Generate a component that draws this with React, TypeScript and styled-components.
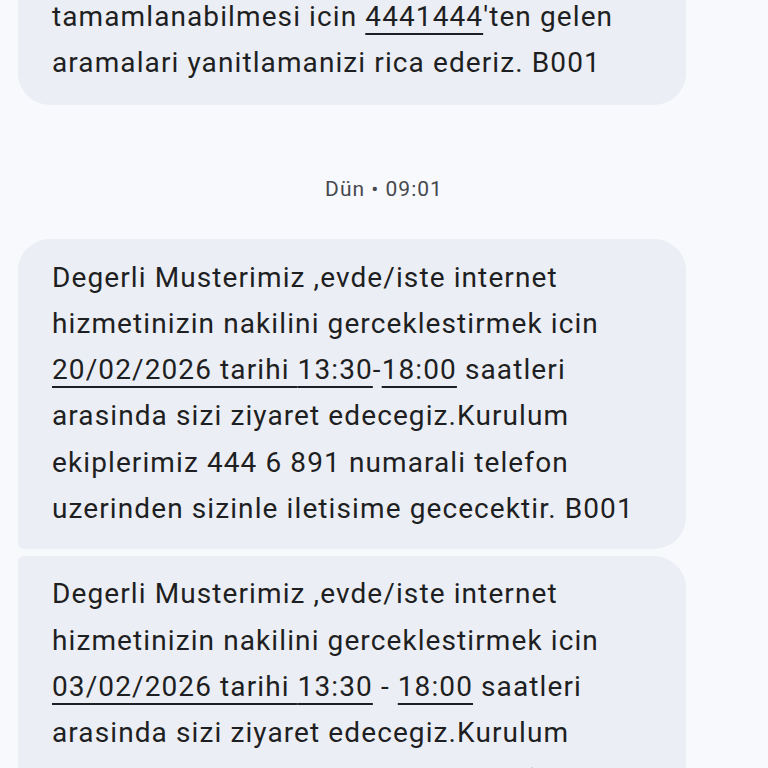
import styled, { createGlobalStyle } from 'styled-components';

const GlobalStyle = createGlobalStyle`
	html, body {
		margin: 0;
		padding: 0;
		background: #f8f9fd;
		overflow: hidden;
	}
	body {
		font-family: Roboto, "Noto Sans", "Liberation Sans", sans-serif;
		-webkit-font-smoothing: antialiased;
	}
`;

const Thread = styled.div`
	width: 768px;
	height: 768px;
	display: flex;
	flex-direction: column;
`;

const Bubble = styled.div<{ $cut?: boolean; $joinTop?: boolean; $joinBottom?: boolean }>`
	margin: 0 82px 0 18px;
	background: #eceef5;
	color: #1e1f22;
	font-size: 28px;
	letter-spacing: 1.1px;
	line-height: 46.3px;
	padding: ${(p) => (p.$cut ? '0 30px 18px 34px' : p.$joinTop ? '15px 30px 17px 34px' : '16px 30px 17px 34px')};
	margin-top: ${(p) => (p.$cut ? '-6px' : '0')};
	border-top-left-radius: ${(p) => (p.$cut ? '0' : p.$joinTop ? '6px' : '32px')};
	border-top-right-radius: ${(p) => (p.$cut ? '0' : '32px')};
	border-bottom-right-radius: 32px;
	border-bottom-left-radius: ${(p) => (p.$joinBottom ? '6px' : '32px')};
	& + & {
		margin-top: 7px;
	}
`;

const Line = styled.div`
	white-space: nowrap;
`;

const Link = styled.span`
	text-decoration: underline;
	text-decoration-thickness: 2px;
	text-underline-offset: 7px;
	text-decoration-skip-ink: none;
`;

const Stamp = styled.div`
	align-self: center;
	margin: 64px 0 30px 0;
	font-size: 21px;
	letter-spacing: 1px;
	line-height: 40px;
	color: #46484e;
`;

function Visit({ date, start, end, spaced }: { date: string; start: string; end: string; spaced?: boolean }) {
	return (
		<>
			<Line>Degerli Musterimiz ,evde/iste internet</Line>
			<Line>hizmetinizin nakilini gerceklestirmek icin</Line>
			<Line>
				<Link>
					{date} tarihi {start}
				</Link>
				{spaced ? ' - ' : '-'}
				<Link>{end}</Link> saatleri
			</Line>
			<Line>arasinda sizi ziyaret edecegiz.Kurulum</Line>
			<Line>ekiplerimiz 444 6 891 numarali telefon</Line>
			<Line>uzerinden sizinle iletisime gececektir. B001</Line>
		</>
	);
}

export default function App() {
	return (
		<>
			<GlobalStyle />
			<Thread>
				<Bubble $cut>
					<Line>
						tamamlanabilmesi icin <Link>4441444</Link>'ten gelen
					</Line>
					<Line>aramalari yanitlamanizi rica ederiz. B001</Line>
				</Bubble>
				<Stamp>Dün • 09:01</Stamp>
				<Bubble $joinBottom>
					<Visit date="20/02/2026" start="13:30" end="18:00" />
				</Bubble>
				<Bubble $joinTop>
					<Visit date="03/02/2026" start="13:30" end="18:00" spaced />
				</Bubble>
			</Thread>
		</>
	);
}
